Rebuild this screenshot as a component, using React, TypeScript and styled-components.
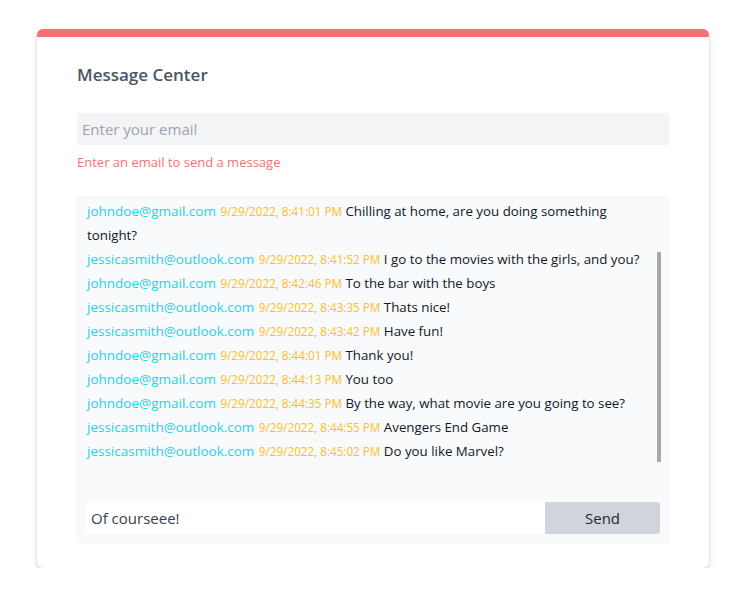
import styled, { createGlobalStyle } from 'styled-components'

const GlobalStyle = createGlobalStyle`
  html, body {
    margin: 0;
    padding: 0;
    background: #ffffff;
  }
  body {
    font-family: "Open Sans", "Noto Sans", sans-serif;
  }
  * {
    box-sizing: border-box;
  }
`

const Page = styled.div`
  padding: 29px 0 0 37px;
`

const Card = styled.div`
  width: 672px;
  background: #ffffff;
  border-top: 8px solid #f87171;
  border-radius: 6px;
  box-shadow: 0 1px 3px rgba(0, 0, 0, 0.16), 0 4px 8px rgba(0, 0, 0, 0.08);
  padding: 24px 40px 25px 40px;
`

const Title = styled.h2`
  margin: 0;
  font-size: 17px;
  line-height: 28px;
  font-weight: 600;
  color: #4b5563;
`

const EmailInput = styled.input`
  display: block;
  width: 100%;
  height: 32px;
  margin-top: 24px;
  padding: 0 5px;
  border: none;
  border-radius: 2px;
  background: #f3f4f6;
  font-family: inherit;
  font-size: 15px;
  color: #374151;
  outline: none;

  &::placeholder {
    color: #9ca3af;
  }
`

const ErrorText = styled.p`
  margin: 7px 0 0 0;
  font-size: 13px;
  line-height: 20px;
  color: #f87171;
`

const ChatBox = styled.div`
  position: relative;
  margin-top: 25px;
  background: #f9fafb;
  border: 1px solid #f3f4f6;
  padding: 0 8px 8px 8px;
`

const MessageList = styled.div`
  height: 292px;
  overflow: hidden;
  padding: 1px 14px 0 1px;
`

const Message = styled.div`
  font-size: 13.3px;
  line-height: 24px;
  color: #111827;
`

const Sender = styled.span`
  color: #22d3ee;
  font-size: 13.5px;
  line-height: 1;
  margin-right: 1px;
`

const Stamp = styled.span`
  color: #fbbf24;
  font-size: 11.7px;
  line-height: 1;
`

const Thumb = styled.div`
  position: absolute;
  top: 54px;
  right: 7px;
  width: 4px;
  height: 210px;
  background: #a8a8a8;
`

const SendForm = styled.form`
  display: flex;
  margin-top: 12px;
  height: 32px;
`

const TextInput = styled.input`
  flex: 1;
  min-width: 0;
  border: none;
  border-radius: 2px 0 0 2px;
  background: #ffffff;
  padding: 0 5px;
  font-family: inherit;
  font-size: 15px;
  color: #374151;
  outline: none;
`

const SendButton = styled.button`
  width: 115px;
  border: none;
  border-radius: 0 3px 3px 0;
  background: #d1d5db;
  font-family: inherit;
  font-size: 15px;
  color: #1f2937;
  cursor: pointer;
`

const messages = [
  { from: 'johndoe@gmail.com', at: '9/29/2022, 8:41:01 PM', text: 'Chilling at home, are you doing something tonight?' },
  { from: 'jessicasmith@outlook.com', at: '9/29/2022, 8:41:52 PM', text: 'I go to the movies with the girls, and you?' },
  { from: 'johndoe@gmail.com', at: '9/29/2022, 8:42:46 PM', text: 'To the bar with the boys' },
  { from: 'jessicasmith@outlook.com', at: '9/29/2022, 8:43:35 PM', text: 'Thats nice!' },
  { from: 'jessicasmith@outlook.com', at: '9/29/2022, 8:43:42 PM', text: 'Have fun!' },
  { from: 'johndoe@gmail.com', at: '9/29/2022, 8:44:01 PM', text: 'Thank you!' },
  { from: 'johndoe@gmail.com', at: '9/29/2022, 8:44:13 PM', text: 'You too' },
  { from: 'johndoe@gmail.com', at: '9/29/2022, 8:44:35 PM', text: 'By the way, what movie are you going to see?' },
  { from: 'jessicasmith@outlook.com', at: '9/29/2022, 8:44:55 PM', text: 'Avengers End Game' },
  { from: 'jessicasmith@outlook.com', at: '9/29/2022, 8:45:02 PM', text: 'Do you like Marvel?' },
]

const App = () => {
  return (
    <>
      <GlobalStyle />
      <Page>
        <Card>
          <Title>Message Center</Title>
          <EmailInput type="email" placeholder="Enter your email" />
          <ErrorText>Enter an email to send a message</ErrorText>
          <ChatBox>
            <MessageList>
              {messages.map((m, i) => (
                <Message key={i}>
                  <Sender>{m.from}</Sender> <Stamp>{m.at}</Stamp> {m.text}
                </Message>
              ))}
            </MessageList>
            <Thumb />
            <SendForm onSubmit={(e) => e.preventDefault()}>
              <TextInput type="text" defaultValue="Of courseee!" />
              <SendButton type="submit">Send</SendButton>
            </SendForm>
          </ChatBox>
        </Card>
      </Page>
    </>
  )
}

export default App
